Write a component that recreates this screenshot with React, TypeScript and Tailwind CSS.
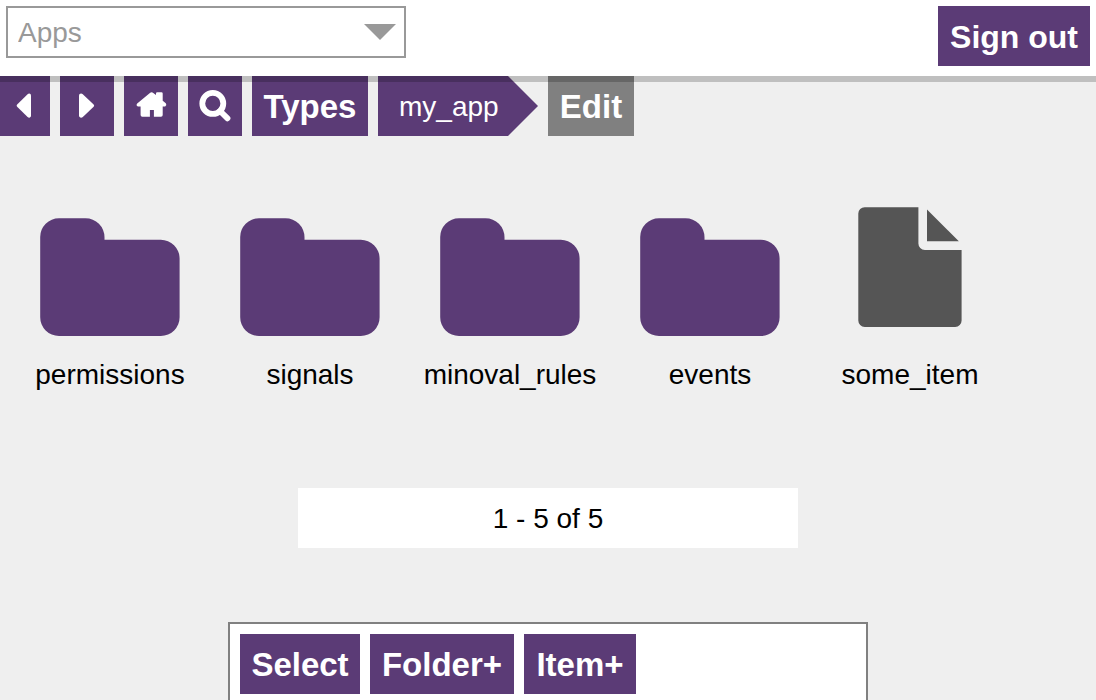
import type { ReactNode } from "react";

const buttonBase =
  "flex h-[60px] items-center justify-center pt-0.5 leading-9 font-bold whitespace-nowrap text-white";

const folders = ["permissions", "signals", "minoval_rules", "events"];

function NavIcon({ label, wide = true, children }: { label: string; wide?: boolean; children: ReactNode }) {
  return (
    <button
      type="button"
      aria-label={label}
      className={`flex h-[60px] items-center justify-center bg-[#5b3b76] ${wide ? "w-[54px]" : "w-[50px]"}`}
    >
      {children}
    </button>
  );
}

function FolderIcon() {
  return (
    <svg viewBox="0 0 160 160" className="size-40 fill-[#5b3b76]" aria-hidden="true">
      <path d="M29 26.2H55.5A19 19 0 0 1 74.5 45.2V47.7H130.8A19 19 0 0 1 149.6 66.5V125A18.8 18.8 0 0 1 130.8 144H29A18.8 18.8 0 0 1 10.2 125V45A18.8 18.8 0 0 1 29 26.2Z" />
    </svg>
  );
}

function FileIcon() {
  return (
    <svg viewBox="0 0 160 160" className="size-40 fill-[#555]" aria-hidden="true">
      <path d="M34.7 15.2H88.4V51.5A6.4 6.4 0 0 0 94.8 58H131.6V128.5A6.4 6.4 0 0 1 125.2 135H34.7A6.4 6.4 0 0 1 28.3 128.5V21.6A6.4 6.4 0 0 1 34.7 15.2Z" />
      <path d="M97 17.6L128.8 49.3H97Z" />
    </svg>
  );
}

function Entry({ name, children }: { name: string; children: ReactNode }) {
  return (
    <li className="w-[200px]">
      <a href={`#${name}`} className="flex flex-col items-center gap-[7px] text-[28px] leading-8 text-black">
        {children}
        <span>{name}</span>
      </a>
    </li>
  );
}

export default function App() {
  return (
    <div className="h-screen overflow-x-hidden overflow-y-auto bg-[#efefef] font-['Liberation_Sans',Arial,sans-serif] [scrollbar-width:none]">
      <header className="relative z-10 flex items-start justify-between bg-white px-1.5 pt-1.5 pb-2.5 shadow-[0_6px_0_rgba(0,0,0,0.2)]">
        <div className="relative w-[400px]">
          <select
            aria-label="Section"
            defaultValue="Apps"
            className="block h-[52px] w-full appearance-none rounded-none border-2 border-[#999] bg-white pt-0.5 pr-12 pl-2.5 text-[28px] leading-8 text-[#999]"
          >
            <option>Apps</option>
          </select>
          <svg
            viewBox="0 0 32 16"
            className="pointer-events-none absolute top-[18px] right-2.5 h-4 w-8 fill-[#999]"
            aria-hidden="true"
          >
            <path d="M0 0H32L16 16Z" />
          </svg>
        </div>
        <button type="button" className={`${buttonBase} bg-[#5b3b76] px-3 text-[32px]`}>
          Sign out
        </button>
      </header>

      <nav className="flex flex-wrap gap-2.5" aria-label="Location">
        <NavIcon label="Back" wide={false}>
          <svg viewBox="0 0 50 60" className="h-[60px] w-[50px] fill-white" aria-hidden="true">
            <path d="M17.4 28.2L27.6 18.2C29 16.9 31 17.6 31 19.6V39.6C31 41.8 29 42.4 27.6 41.1L17.4 31C16.4 30 16.4 29.2 17.4 28.2Z" />
          </svg>
        </NavIcon>
        <NavIcon label="Forward">
          <svg viewBox="0 0 54 60" className="h-[60px] w-[54px] fill-white" aria-hidden="true">
            <path d="M33.4 28.2L22.8 18.2C21.4 16.9 19 17.4 19 19.6V39.6C19 41.8 21.4 42.4 22.8 41.1L33.4 31C34.4 30 34.4 29.2 33.4 28.2Z" />
          </svg>
        </NavIcon>
        <NavIcon label="Home">
          <svg viewBox="0 0 54 60" className="h-[60px] w-[54px] fill-white" aria-hidden="true">
            <path d="M13.2 27.4L25.9 16.9Q27.6 15.6 29.3 16.9L32 19.1V17.6Q32 16.3 33.3 16.3H37.4Q38.7 16.3 38.7 17.6V24.7L41.8 27.3Q43.2 29.2 41.2 30.6H38.7V39Q38.7 40.7 37 40.7H29.9V34H25.9V40.7H18.3Q16.6 40.7 16.6 39V30.6H14Q11.6 29.2 13.2 27.4Z" />
          </svg>
        </NavIcon>
        <NavIcon label="Search">
          <svg viewBox="0 0 54 60" className="h-[60px] w-[54px] fill-none stroke-white" aria-hidden="true">
            <circle cx="24.8" cy="27.4" r="10.5" strokeWidth="5.8" />
            <path d="M32 35L39.5 42.3" strokeWidth="5.8" strokeLinecap="round" />
          </svg>
        </NavIcon>
        <button type="button" className={`${buttonBase} w-[116px] bg-[#5b3b76] text-[33px]`}>
          Types
        </button>
        <a
          href="#my_app"
          className="flex h-[60px] w-40 items-center bg-[#5b3b76] pt-0.5 pl-[21px] text-[28px] leading-8 text-white [clip-path:polygon(0_0,calc(100%-30px)_0,100%_50%,calc(100%-30px)_100%,0_100%)]"
        >
          my_app
        </a>
        <button type="button" className={`${buttonBase} w-[86px] bg-[#808080] text-[33px]`}>
          Edit
        </button>
      </nav>

      <main className="flex flex-col items-center pt-14">
        <ul className="flex w-full flex-wrap px-2.5">
          {folders.map((name) => (
            <Entry key={name} name={name}>
              <FolderIcon />
            </Entry>
          ))}
          <Entry name="some_item">
            <FileIcon />
          </Entry>
        </ul>

        <p className="mt-[97px] w-full max-w-[500px] bg-white pt-[15px] pb-[13px] text-center text-[28px] leading-8 text-black">
          1 - 5 of 5
        </p>

        <div className="mt-[74px] flex w-full max-w-[640px] flex-wrap gap-2.5 border-2 border-[#808080] bg-white p-2.5">
          <button type="button" className={`${buttonBase} w-[120px] bg-[#5b3b76] text-[33px]`}>
            Select
          </button>
          <button type="button" className={`${buttonBase} w-36 bg-[#5b3b76] text-[33px]`}>
            Folder+
          </button>
          <button type="button" className={`${buttonBase} w-28 bg-[#5b3b76] text-[33px]`}>
            Item+
          </button>
        </div>
      </main>
    </div>
  );
}
